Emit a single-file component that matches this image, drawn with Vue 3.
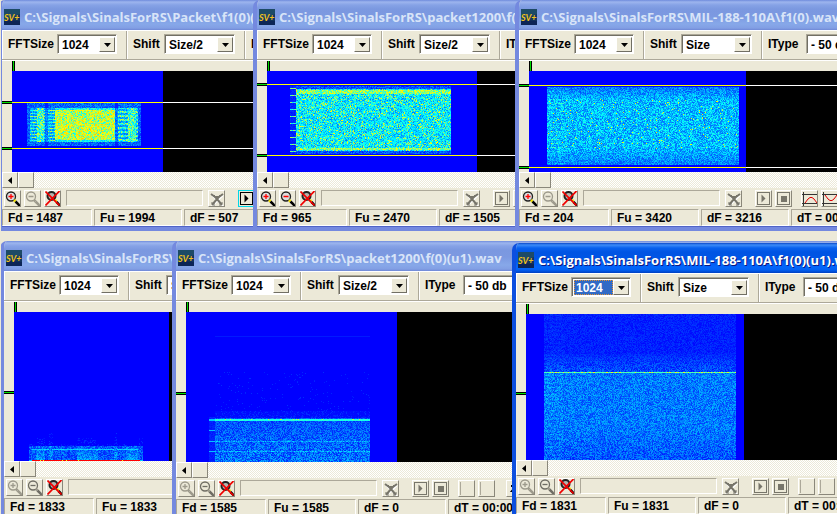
<script setup>
import { ref, onMounted } from 'vue'

const between = (v, a, b) => v >= a && v < b

function packetBurst(x, y, r) {
  if (!between(x, 15, 129) || !between(y, 32, 75)) return 0
  const gap = between(x, 33, 36) || between(x, 103, 106)
  if (!between(y, 37, 71) || x < 18 || x >= 126) return gap ? 0.06 : 0.08 + 0.24 * r
  if (gap) return 0.14 + 0.22 * r
  if (between(x, 43, 103)) return between(y, 39, 69) ? 0.44 + 0.36 * Math.sqrt(r) : 0.36 + 0.26 * r
  if (between(x, 25, 32)) return 0.38 + 0.36 * r
  if (between(x, 116, 124)) return 0.36 + 0.36 * r
  if (x < 43) return y % 3 === 0 ? 0.4 + 0.34 * r : 0.2 + 0.24 * r
  return y % 4 < 2 ? 0.36 + 0.38 * r : 0.2 + 0.24 * r
}

function packetFast(x, y, r, q) {
  if (!between(y, 15, 83)) return 0
  if (between(x, 23, 29)) return y % 7 === 3 ? 0.44 + 0.26 * r : 0.03 + 0.08 * r
  if (!between(x, 29, 184)) return 0
  if (y < 18 || y > 79) return 0.04 + 0.24 * r
  if (between(y, 19, 23) || between(y, 77, 79)) return 0.5 + 0.27 * r
  if (q < 0.13) return 0.62 + 0.14 * r
  return 0.2 + 0.36 * Math.sqrt(r)
}

function modemWide(x, y, r, q) {
  if (!between(x, 18, 210) || !between(y, 16, 94)) return 0
  const fade = Math.min(1, (y - 8) / 22, (104 - y) / 28)
  if (between(y, 28, 78) && q < 0.02) return 0.66 + 0.1 * r
  const band = x < 37 && y % 4 === 0 ? 0.06 : 0
  return (0.17 + 0.34 * r) * (0.5 + 0.5 * fade) + 0.03 * fade + band
}

function packetLow(x, y, r, q) {
  if (!between(x, 15, 129)) return 0
  if (y === 148) return between(x, 18, 126) ? (q < 0.06 ? 0.75 : 1) : 0.4
  const spike = between(x, 35, 39) || between(x, 100, 103)
  if (y < 134) {
    const tall = spike ? 119 : between(x, 63, 82) || between(x, 23, 31) || x > 124 ? 125 : 131
    return y > tall && q < 0.32 ? 0.02 + 0.08 * r : 0
  }
  if (spike) return 0.12 + 0.3 * r
  if (y === 137 && between(x, 18, 124)) return 0.36 + 0.1 * r
  const bright = between(x, 63, 84) || between(x, 112, 124) || between(x, 22, 31) ? 0.12 : 0
  return 0.05 + bright * ((y - 130) / 16) + 0.24 * r
}

function packetFastLow(x, y, r, q) {
  if (between(x, 23, 29)) {
    if (y === 108 || y === 107) return 0.4
    return [118, 129, 139].includes(y) ? 0.38 : y > 104 ? 0.03 + 0.06 * r : 0
  }
  if (!between(x, 29, 184)) return 0
  if (y === 24) return 0.05
  if (y < 60) return 0
  if (y < 99) return q < 0.03 ? 0.05 + 0.04 * r : 0
  if (y < 106) return q < 0.5 ? 0.1 * r : 0.02
  if (y === 107 || y === 108) return y === 107 && q < 0.12 ? 0.68 : 0.5 + 0.05 * r
  const row = y === 129 || y === 139 ? 0.12 : 0
  return 0.06 + row + (0.2 + (y - 108) * 0.003) * r
}

function modemWideLow(x, y, r, q) {
  if (!between(x, 18, 210)) return 0
  if (y === 58) return q < 0.25 ? 0.72 : 0.55 + 0.06 * r
  const stripe = x < 37 && y % 4 < 2 && q < 0.7 ? 0.05 : 0
  if (y < 40) return 0.01 + 0.1 * r + stripe * 0.5
  if (y < 58) return 0.03 + (0.1 + (y - 40) * 0.008) * r + stripe * 0.5
  const slope = y > 112 ? (y - 112) * 0.002 : 0
  return 0.11 - slope + 0.25 * r + stripe
}

const windows = [
  { id: 'w1', title: 'C:\\Signals\\SinalsForRS\\Packet\\f1(0)(f', left: -3, top: 0, shift: 'Size/2', w: 151, h: 101, level: packetBurst, cuts: [31, 77], marks: [31, 77], fd: 1487, fu: 1994, df: 507, dt: '00:00', zoomIn: 'on', zoomOut: 'off', play: true },
  { id: 'w2', title: 'C:\\Signals\\SinalsForRS\\packet1200\\f(0)', left: 252, top: 0, shift: 'Size/2', w: 210, h: 101, level: packetFast, cuts: [13, 84], marks: [13, 84], fd: 965, fu: 2470, df: 1505, dt: '00:00', zoomIn: 'on', zoomOut: 'on' },
  { id: 'w3', title: 'C:\\Signals\\SinalsForRS\\MIL-188-110A\\f1(0).wav', left: 514, top: 0, shift: 'Size', w: 217, h: 101, level: modemWide, cuts: [14, 96], marks: [14, 96], fd: 204, fu: 3420, df: 3216, dt: '00:00', zoomIn: 'on', zoomOut: 'off', charts: true },
  { id: 'w4', title: 'C:\\Signals\\SinalsForRS\\Packet', left: -1, top: 241, shift: 'Size', w: 155, h: 149, level: packetLow, cuts: [], marks: [80], fd: 1833, fu: 1833, df: 0, dt: '00:00', zoomIn: 'off', zoomOut: 'off dim' },
  { id: 'w5', title: 'C:\\Signals\\SinalsForRS\\packet1200\\f(0)(u1).wav', left: 171, top: 241, shift: 'Size/2', w: 211, h: 150, level: packetFastLow, cuts: [], marks: [81], fd: 1585, fu: 1585, df: 0, dt: '00:00', zoomIn: 'off', zoomOut: 'off dim' },
  { id: 'w6', title: 'C:\\Signals\\SinalsForRS\\MIL-188-110A\\f1(0)(u1).wav', left: 511, top: 243, shift: 'Size', w: 218, h: 146, level: modemWideLow, cuts: [], marks: [79], fd: 1831, fu: 1831, df: 0, dt: '00:00', zoomIn: 'off', zoomOut: 'off dim', active: true }
]

const canvases = ref([])

function makeRandom(seed) {
  let a = seed
  return () => {
    a = (a + 0x6d2b79f5) | 0
    let t = Math.imul(a ^ (a >>> 15), 1 | a)
    t = (t + Math.imul(t ^ (t >>> 7), 61 | t)) ^ t
    return ((t ^ (t >>> 14)) >>> 0) / 4294967296
  }
}

// Level 0 is pure blue, 0.5 cyan, 0.75 yellow and 1 red.
function colour(v) {
  if (v <= 0.5) return [0, v * 510, 255]
  if (v <= 0.75) return [(v - 0.5) * 1020, 255, 255 - (v - 0.5) * 1020]
  return [255, 255 - (v - 0.75) * 1020, 0]
}

function paint(canvas, win, index) {
  const ctx = canvas.getContext('2d')
  const image = ctx.createImageData(win.w, win.h)
  const random = makeRandom(index * 97 + 11)
  for (let y = 0; y < win.h; y++) {
    for (let x = 0; x < win.w; x++) {
      const [r, g, b] = win.cuts.includes(y)
        ? [255, 255, 0]
        : colour(Math.max(0, Math.min(1, win.level(x, y, random(), random()))))
      image.data.set([r, g, b, 255], (y * win.w + x) * 4)
    }
  }
  ctx.putImageData(image, 0, 0)
}

onMounted(() => {
  canvases.value.forEach((c) => {
    const i = Number(c.dataset.index)
    paint(c, windows[i], i)
  })
})
</script>

<template>
  <main class="desktop">
    <section
      v-for="(win, i) in windows"
      :key="win.id"
      class="window"
      :class="{ active: win.active }"
      :style="{ left: win.left + 'px', top: win.top + 'px' }"
    >
      <header class="titlebar">
        <svg class="app-icon" viewBox="0 0 16 16" aria-hidden="true">
          <rect width="16" height="16" fill="#12355c" />
          <path d="M0 0H16V5L0 11Z" fill="#1d4a66" />
          <path d="M0 11L16 12V16H0Z" fill="#0c2556" />
          <text x="0" y="12" class="app-mark">SV+</text>
        </svg>
        <h2>{{ win.title }}</h2>
      </header>

      <div class="toolbar">
        <div class="field size">
          <label :for="win.id + '-fft'">FFTSize</label>
          <div class="combo">
            <select :id="win.id + '-fft'" :class="{ picked: win.active }"><option>1024</option></select>
            <span class="drop"><svg viewBox="0 0 7 4"><path d="M0 0H7L3.5 4Z" /></svg></span>
          </div>
        </div>
        <div class="field shift">
          <label :for="win.id + '-shift'">Shift</label>
          <div class="combo">
            <select :id="win.id + '-shift'"><option>{{ win.shift }}</option></select>
            <span class="drop"><svg viewBox="0 0 7 4"><path d="M0 0H7L3.5 4Z" /></svg></span>
          </div>
        </div>
        <div class="field type">
          <label :for="win.id + '-type'">IType</label>
          <div class="combo">
            <select :id="win.id + '-type'"><option>- 50 db</option></select>
            <span class="drop"><svg viewBox="0 0 7 4"><path d="M0 0H7L3.5 4Z" /></svg></span>
          </div>
        </div>
      </div>

      <div class="ruler"><i class="tick"></i></div>

      <div class="view">
        <div class="gutter">
          <i v-for="m in win.marks" :key="m" class="mark" :style="{ top: m - 1 + 'px' }"></i>
        </div>
        <div class="plot">
          <i v-for="c in win.cuts" :key="c" class="cut" :style="{ top: c + 'px' }"></i>
          <canvas ref="canvases" :data-index="i" :width="win.w" :height="win.h"></canvas>
        </div>
      </div>

      <div class="scroll">
        <button type="button" aria-label="Scroll left"><svg viewBox="0 0 4 7"><path d="M4 0V7L0 3.5Z" /></svg></button>
        <span class="thumb"></span>
      </div>

      <div class="tools">
        <div class="group zooms">
          <button type="button" aria-label="Zoom in">
            <svg viewBox="0 0 15 15" :class="win.zoomIn">
              <circle class="lens" cx="6" cy="5.5" r="4.5" />
              <path class="sign" d="M3.5 5.5H8.5M6 3V8" />
              <path class="ring" d="M9 9L10.500 10.500" />
              <path class="stem" d="M10.500 10.500L15 15" />
            </svg>
          </button>
          <button type="button" aria-label="Zoom out">
            <svg viewBox="0 0 15 15" :class="win.zoomOut">
              <circle class="lens" cx="6" cy="5.5" r="4.5" />
              <path class="sign" d="M3.5 5.5H8.5" />
              <path class="ring" d="M9 9L10.500 10.500" />
              <path class="stem" d="M10.500 10.500L15 15" />
            </svg>
          </button>
          <button type="button" aria-label="Reset zoom">
            <svg viewBox="0 0 15 15">
              <circle class="lens dark" cx="6.5" cy="5" r="4" />
              <path class="ring" d="M10 9L11.500 10.500" />
              <path class="stem" d="M11.500 11L15 14.500" />
              <path class="cross" d="M0.500 0.500L14.500 14.500M14.500 0L0.500 14.500" />
            </svg>
          </button>
        </div>
        <output class="progress"></output>
        <button type="button" class="cancel" aria-label="Cancel">
          <svg viewBox="0 0 15 15">
            <path class="pale" d="M3 4L14 15M14 4L3 15" />
            <path class="grey" d="M2 3L6 6L8 8L13 14M14 3L10 6L8 8L3 14M8 5V10" />
            <path class="thin" d="M5 4L7 6M11 4L9 6M2 12H5V15M14 12H11V15" />
          </svg>
        </button>
        <div class="group">
          <button type="button" aria-label="Play" :class="{ ready: win.play }">
            <svg viewBox="0 0 15 15" :class="{ lit: win.play }">
              <rect class="box" x="1.500" y="1.500" width="12" height="12" />
              <path class="glyph" d="M5.5 3.5V11.5L9.5 7.5Z" />
            </svg>
          </button>
          <button type="button" aria-label="Stop">
            <svg viewBox="0 0 15 15">
              <rect class="box" x="1.500" y="1.500" width="12" height="12" />
              <rect class="glyph" x="5" y="5" width="6" height="6" />
            </svg>
          </button>
        </div>
        <div class="group charts">
          <button type="button" aria-label="Peak curve">
            <svg viewBox="0 0 15 15">
              <template v-if="win.charts">
                <path class="axis" d="M1.500 1V15M0 3.500H15M0 12.500H15" />
                <path class="curve" d="M3 12L6 8L8 6.500H10L12 8L15 12" />
              </template>
              <path v-else class="faint" d="M1.500 1V14" />
            </svg>
          </button>
          <button type="button" aria-label="Notch curve">
            <svg viewBox="0 0 15 15">
              <template v-if="win.charts">
                <path class="axis" d="M1.500 1V15M0 3.500H15M0 12.500H15" />
                <path class="curve" d="M3 4L6 8L8 9.500H10L12 8L15 4" />
              </template>
              <path v-else class="faint" d="M1.500 1V14" />
            </svg>
          </button>
        </div>
        <button type="button" class="last" aria-label="Marker">
          <svg viewBox="0 0 15 15"><path class="bold" d="M4 5H9L5 10H9" /></svg>
        </button>
      </div>

      <footer class="status">
        <span>Fd = {{ win.fd }}</span>
        <span>Fu = {{ win.fu }}</span>
        <span>dF = {{ win.df }}</span>
        <span>dT = {{ win.dt }}</span>
      </footer>
    </section>
  </main>
</template>

<style>
body {
  background: #ece9d8;
}
</style>

<style scoped>
.desktop {
  position: relative;
  height: 100vh;
  margin-left: 1px;
  overflow: hidden;
  background: #ece9d8;
  font: bold 12px/16px "Liberation Sans", Arial, sans-serif;
  color: #000;
}
.window {
  --frame: #7489df;
  --edge: #5064c8;
  position: absolute;
  right: -60px;
  box-sizing: border-box;
  display: flex;
  flex-direction: column;
  overflow: hidden;
  border: 4px solid var(--frame);
  border-top: 0;
  border-radius: 7px 7px 0 0;
  background: #ece9d8;
  box-shadow: inset 0 -1px var(--edge);
}
.titlebar {
  flex: none;
  display: flex;
  align-items: center;
  gap: 4px;
  height: 30px;
  margin: 0 -4px;
  padding: 3px 6px 0;
  box-sizing: border-box;
  background: linear-gradient(#6f8bdc 0, #9db5ee 2px, #86a2e6 5px, #7b98e0 9px, #7c99e1 16px, #87a8e9 24px, #829fe4 28px, #6f88d6 30px);
}
.active {
  --frame: #0c4fdf;
  --edge: #001ea0;
}
.active .titlebar {
  background: linear-gradient(#0a48c8 0, #3c8bf8 2px, #0861ee 5px, #0054e3 9px, #0055e5 16px, #0366fb 24px, #0260f2 27px, #0040c0 30px);
}
.app-icon {
  flex: none;
  width: 16px;
  height: 16px;
}
.app-mark {
  font: italic bold 9px Lato, "Liberation Sans", sans-serif;
  fill: #f2c21c;
}
h2 {
  margin: 0;
  font: bold 13px/18px "Open Sans", "Trebuchet MS", sans-serif;
  color: #d8e4f8;
  white-space: pre;
}
.active h2 {
  color: #fff;
  text-shadow: 1px 1px #0a1883;
}
.toolbar {
  flex: none;
  display: flex;
  height: 30px;
  box-sizing: border-box;
  border-top: 1px solid #fff;
  border-bottom: 1px solid #aca899;
}
.field {
  flex: none;
  display: flex;
  align-items: center;
  justify-content: space-between;
  padding: 0 9px 2px 6px;
  border-right: 1px solid #aca899;
  box-shadow: inset 1px 0 #fff;
  box-sizing: border-box;
}
.field.size {
  width: 125px;
}
.field.shift {
  width: 118px;
}
.field.type {
  width: 134px;
}
.combo {
  display: flex;
  box-sizing: border-box;
  width: 60px;
  height: 20px;
  border: 1px solid;
  border-color: #aca899 #fff #fff #aca899;
  box-shadow: inset 1px 1px #716f64;
  padding: 2px 1px 1px 2px;
  background: #fff;
}
.shift .combo {
  width: 71px;
}
.type .combo {
  width: 80px;
}
select {
  appearance: none;
  flex: 1;
  min-width: 0;
  border: 0;
  margin: 0;
  padding: 0 0 0 2px;
  border-radius: 0;
  background: transparent;
  color: inherit;
  font: inherit;
  outline: 0;
}
select.picked {
  background: #316ac5;
  color: #fff;
  outline: 1px dotted #e0953a;
  outline-offset: -1px;
}
.drop {
  flex: none;
  display: flex;
  align-items: center;
  justify-content: center;
  width: 16px;
  box-sizing: border-box;
  background: #ece9d8;
  border: 1px solid;
  border-color: #fff #716f64 #716f64 #fff;
}
.drop svg {
  width: 7px;
  height: 4px;
}
.ruler {
  flex: none;
  height: 11px;
  box-sizing: border-box;
  border-top: 1px solid #fff;
  padding-left: 10px;
}
.tick {
  display: block;
  width: 1px;
  height: 10px;
  background: #00d800;
  border: solid #000;
  border-width: 0 1px;
}
.view {
  flex: none;
  display: flex;
}
.gutter {
  position: relative;
  flex: none;
  width: 10px;
}
.mark {
  position: absolute;
  left: 0;
  right: 0;
  height: 1px;
  background: #00e000;
  border: solid #000;
  border-width: 1px 0;
}
.plot {
  position: relative;
  flex: 1;
  background: #000;
}
.cut {
  position: absolute;
  left: 0;
  right: 0;
  height: 1px;
  background: #fff;
}
canvas {
  position: relative;
  display: block;
}
.scroll {
  flex: none;
  display: flex;
  height: 16px;
  background: repeating-conic-gradient(#fff 0 25%, #ece9d8 0 50%) 0 0 / 2px 2px;
}
button,
.thumb {
  flex: none;
  display: flex;
  align-items: center;
  justify-content: center;
  box-sizing: border-box;
  width: 17px;
  height: 17px;
  padding: 0;
  margin: 0;
  border: 1px solid;
  border-color: #fff #8a877a #8a877a #fff;
  border-radius: 0;
  background: #ece9d8;
}
.scroll button,
.thumb {
  width: 16px;
  height: 16px;
}
.scroll svg {
  width: 4px;
  height: 7px;
}
.tools {
  flex: none;
  display: flex;
  padding: 2px;
}
.tools svg {
  flex: none;
  width: 15px;
  height: 15px;
  fill: none;
}
.group {
  display: flex;
  gap: 3px;
}
.progress {
  flex: none;
  box-sizing: border-box;
  width: 137px;
  height: 16px;
  margin: 0 5px;
  border: 1px solid;
  border-color: #aca899 #fff #fff #aca899;
}
.cancel {
  margin-right: 13px;
}
.charts {
  margin-left: 9px;
}
.last {
  margin-left: 11px;
}
.lens {
  fill: #dcdcdc;
  stroke: #222;
  stroke-width: 1.3;
}
.lens.dark {
  fill: #b4b4ae;
  stroke-width: 2;
}
.sign {
  stroke: #f00;
  stroke-width: 1.3;
}
.ring {
  stroke: #f0e000;
  stroke-width: 2.5;
}
.stem {
  stroke: #000;
  stroke-width: 2.5;
}
.off .lens {
  fill: #ece9d8;
  stroke: #9d9a8c;
}
.off .sign,
.off .ring,
.off .stem {
  stroke: #9d9a8c;
}
.dim .lens,
.dim .sign,
.dim .stem {
  stroke: #6f6d64;
}
.cross {
  stroke: #f00000;
  stroke-width: 1.6;
}
.pale {
  stroke: #fff;
  stroke-width: 2;
}
.grey {
  stroke: #77756a;
  stroke-width: 2;
}
.thin {
  stroke: #77756a;
}
.box {
  stroke: #77756a;
}
.glyph {
  fill: #77756a;
}
.ready {
  border-color: #00d8e8;
}
.lit .box {
  stroke: #000;
}
.lit .glyph {
  fill: #000;
}
.axis {
  stroke: #333;
}
.curve {
  stroke: #e00000;
}
.faint {
  stroke: #aca899;
}
.bold {
  stroke: #000;
  stroke-width: 2;
}
.status {
  flex: none;
  display: flex;
  gap: 2px;
  padding-bottom: 1px;
}
.status span {
  flex: none;
  box-sizing: border-box;
  width: 88px;
  height: 17px;
  padding-left: 5px;
  border: 1px solid;
  border-color: #aca899 #fff #fff #aca899;
  white-space: pre;
}
.status span:first-child {
  width: 90px;
}
</style>
